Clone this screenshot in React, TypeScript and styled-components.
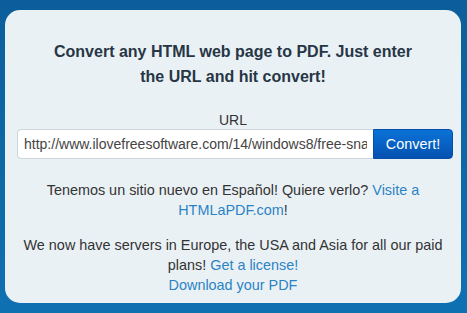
import styled, { createGlobalStyle } from 'styled-components';

const GlobalStyle = createGlobalStyle`
  html, body {
    margin: 0;
    padding: 0;
  }
  body {
    width: 467px;
    height: 313px;
    overflow: hidden;
    font-family: 'Liberation Sans', Arial, sans-serif;
    background: linear-gradient(180deg, #0c5e9b 0%, #0f71b2 100%);
  }
`;

function App() {
  return (
    <>
      <GlobalStyle />
      <Page>
        <Card>
          <Heading>
            Convert any HTML web page to PDF. Just enter the URL and hit
            convert!
          </Heading>
          <Form onSubmit={(e) => e.preventDefault()}>
            <Label htmlFor="url">URL</Label>
            <InputRow>
              <UrlInput
                id="url"
                type="text"
                defaultValue="http://www.ilovefreesoftware.com/14/windows8/free-snap-windows-8-app"
              />
              <ConvertButton type="submit">Convert!</ConvertButton>
            </InputRow>
          </Form>
          <Note>
            Tenemos un sitio nuevo en Español! Quiere verlo?{' '}
            <Link href="#">Visite a HTMLaPDF.com</Link>!
          </Note>
          <Note $tight>
            We now have servers in Europe, the USA and Asia for all our paid
            plans! <Link href="#">Get a license!</Link>
            <br />
            <Link href="#">Download your PDF</Link>
          </Note>
        </Card>
      </Page>
    </>
  );
}

const Page = styled.div`
  padding: 10px 6px 10px 5px;
  box-sizing: border-box;
  height: 313px;
`;

const Card = styled.div`
  background-color: #eaf1f5;
  border-radius: 15px;
  height: 293px;
  box-sizing: border-box;
  padding: 29px 12px 0;
  display: flex;
  flex-direction: column;
  align-items: center;
`;

const Heading = styled.h1`
  margin: 0;
  width: 380px;
  text-align: center;
  font-size: 16px;
  line-height: 25px;
  font-weight: bold;
  color: #273645;
`;

const Form = styled.form`
  margin-top: 23px;
  width: 100%;
  display: flex;
  flex-direction: column;
  align-items: center;
`;

const Label = styled.label`
  font-size: 14px;
  line-height: 16px;
  color: #333;
  margin-bottom: 1px;
`;

const InputRow = styled.div`
  display: flex;
  width: 436px;
  height: 30px;
  margin-left: 4px;
`;

const UrlInput = styled.input`
  flex: 1;
  min-width: 0;
  box-sizing: border-box;
  height: 30px;
  padding: 0 6px;
  border: 1px solid #cdd5db;
  border-right: none;
  border-radius: 4px 0 0 4px;
  background: #fff;
  font-family: 'Liberation Sans', Arial, sans-serif;
  font-size: 14px;
  color: #444;
  outline: none;
`;

const ConvertButton = styled.button`
  width: 80px;
  height: 30px;
  border: 1px solid #0450a8;
  border-radius: 0 4px 4px 0;
  background: linear-gradient(180deg, #0b72d8 0%, #0452b0 100%);
  color: #fff;
  font-family: 'Liberation Sans', Arial, sans-serif;
  font-size: 14.4px;
  cursor: pointer;
`;

const Note = styled.p<{ $tight?: boolean }>`
  margin: ${(p) => (p.$tight ? '15px 0 0' : '21px 0 0')};
  text-align: center;
  font-size: 14.4px;
  line-height: 20px;
  color: #333;
`;

const Link = styled.a`
  color: #2b83c6;
  text-decoration: none;
`;

export default App;
